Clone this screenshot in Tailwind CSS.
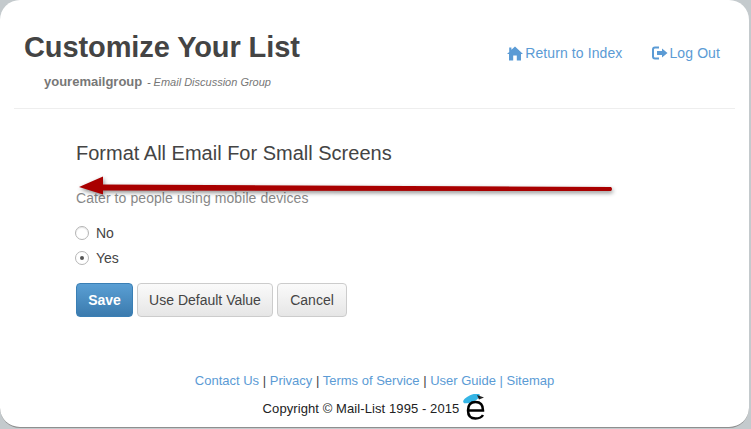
<!DOCTYPE html>
<html>
<head>
<meta charset="utf-8">
<script src="https://cdn.jsdelivr.net/npm/@tailwindcss/browser@4"></script>
</head>
<body class="m-0 overflow-hidden bg-[#c4cacd] font-['Liberation_Sans',Arial,sans-serif]">
<div class="relative h-[428px] w-[749px] overflow-hidden rounded-[20px] border-b border-[#8f8f8f] bg-white">
  <header class="mx-[14px] flex h-[109px] items-start justify-between border-b border-[#eeeeee]">
    <div class="pl-[10px] pt-[29px]">
      <h1 class="text-[29px] leading-[36px] font-bold tracking-[-0.1px] text-[#444444]">Customize Your List</h1>
      <p class="mt-[8px] pl-[20px] text-[13px] leading-[18px] text-[#777777]"><b>youremailgroup</b> <span class="ml-[1px] text-[11px] italic">- Email Discussion Group</span></p>
    </div>
    <nav class="flex gap-[30px] pr-[15px] pt-[44px] text-[14px] leading-[18px] tracking-[0.1px] text-[#5b9bd5]">
      <a class="flex items-center gap-[2px]"><svg class="h-[15px] w-[16px]" viewBox="0 0 16 15" fill="#5b9bd5"><path d="M8 0.500 L16 8 H14 V14.500 H9.800 V9.500 H6.200 V14.500 H2 V8 H0 L2.200 5.900 V1.500 H4.400 V3.800 Z"/></svg>Return to Index</a>
      <a class="flex items-center gap-[1px]"><svg class="h-[14px] w-[16px]" viewBox="0 0 16 14" fill="none"><path d="M7 1.500 H3 Q1 1.500 1 3.500 V10.500 Q1 12.500 3 12.500 H7" stroke="#5b9bd5" stroke-width="2"/><path d="M5 5 H10 V2.500 L15.500 7 L10 11.500 V9 H5 Z" fill="#5b9bd5"/></svg>Log Out</a>
    </nav>
  </header>

  <main class="pl-[76px]">
    <h2 class="mt-[32px] text-[20px] leading-[24px] font-normal text-[#444444]">Format All Email For Small Screens</h2>
    <p class="mt-[23px] text-[14px] leading-[20px] tracking-[0.08px] text-[#888888]">Cater to people using mobile devices</p>
    <div class="mt-[15px] flex flex-col gap-[5px] text-[14px] leading-[20px] text-[#444444]">
      <label class="-ml-[1px] flex items-center gap-[7px]"><span class="h-[14px] w-[14px] rounded-full border border-[#b5b5b5] bg-white shadow-[inset_0_1px_1px_rgba(0,0,0,0.1)]"></span>No</label>
      <label class="-ml-[1px] flex items-center gap-[7px]"><span class="flex h-[14px] w-[14px] items-center justify-center rounded-full border border-[#b5b5b5] bg-white"><span class="h-[4px] w-[4px] rounded-full bg-[#555555]"></span></span>Yes</label>
    </div>
    <div class="mt-[15px] flex gap-[4px] text-[14px]">
      <button class="h-[34px] w-[57px] rounded-[4px] border border-[#3a7fb5] bg-gradient-to-b from-[#5a9fd4] to-[#3b7bae] font-bold text-white">Save</button>
      <button class="h-[34px] w-[136px] rounded-[4px] border border-[#cccccc] bg-gradient-to-b from-[#fafafa] to-[#e6e6e6] text-[#444444]">Use Default Value</button>
      <button class="h-[34px] w-[70px] rounded-[4px] border border-[#cccccc] bg-gradient-to-b from-[#fafafa] to-[#e6e6e6] text-[#444444]">Cancel</button>
    </div>
  </main>

  <footer class="absolute inset-x-0 top-[371px] text-center text-[13px] leading-[20px] text-[#444444]">
    <p class="text-[#5b9bd5]">Contact Us <span class="text-[#444444]">|</span> Privacy <span class="text-[#444444]">|</span> Terms of Service <span class="text-[#444444]">|</span> User Guide <span class="text-[#5b9bd5]">|</span> Sitemap</p>
    <p class="mt-[8px] flex h-[20px] items-center justify-center tracking-[0.09px] text-[#222222]">Copyright © Mail-List 1995 - 2015
      <svg class="ml-[3px] -mt-[4px] h-[26px] w-[24px]" viewBox="0 0 24 26"><ellipse cx="9.500" cy="4.500" rx="9" ry="3.500" transform="rotate(-24 9.500 4.500)" fill="#35b5e5"/><path d="M15 1 L22 3.500 L17 5.500 Z" fill="#222222"/><path d="M6 16.500 H21 Q21 8 13.500 8 Q6 8 6 16.500 Q6 24.500 13.500 24.500 Q19 24.500 21 21" fill="none" stroke="#000000" stroke-width="2.500"/></svg>
    </p>
  </footer>

  <svg class="absolute left-[76px] top-[172px] overflow-visible drop-shadow-[1px_2px_2px_rgba(0,0,0,0.45)]" width="540" height="30" viewBox="0 0 540 30">
    <path d="M3 15 L27 4.500 L27 12.500 L535 15 Q537 17 535 19 L27 18.500 L27 22.500 Z" fill="#a90000"/>
  </svg>
</div>
</body>
</html>
